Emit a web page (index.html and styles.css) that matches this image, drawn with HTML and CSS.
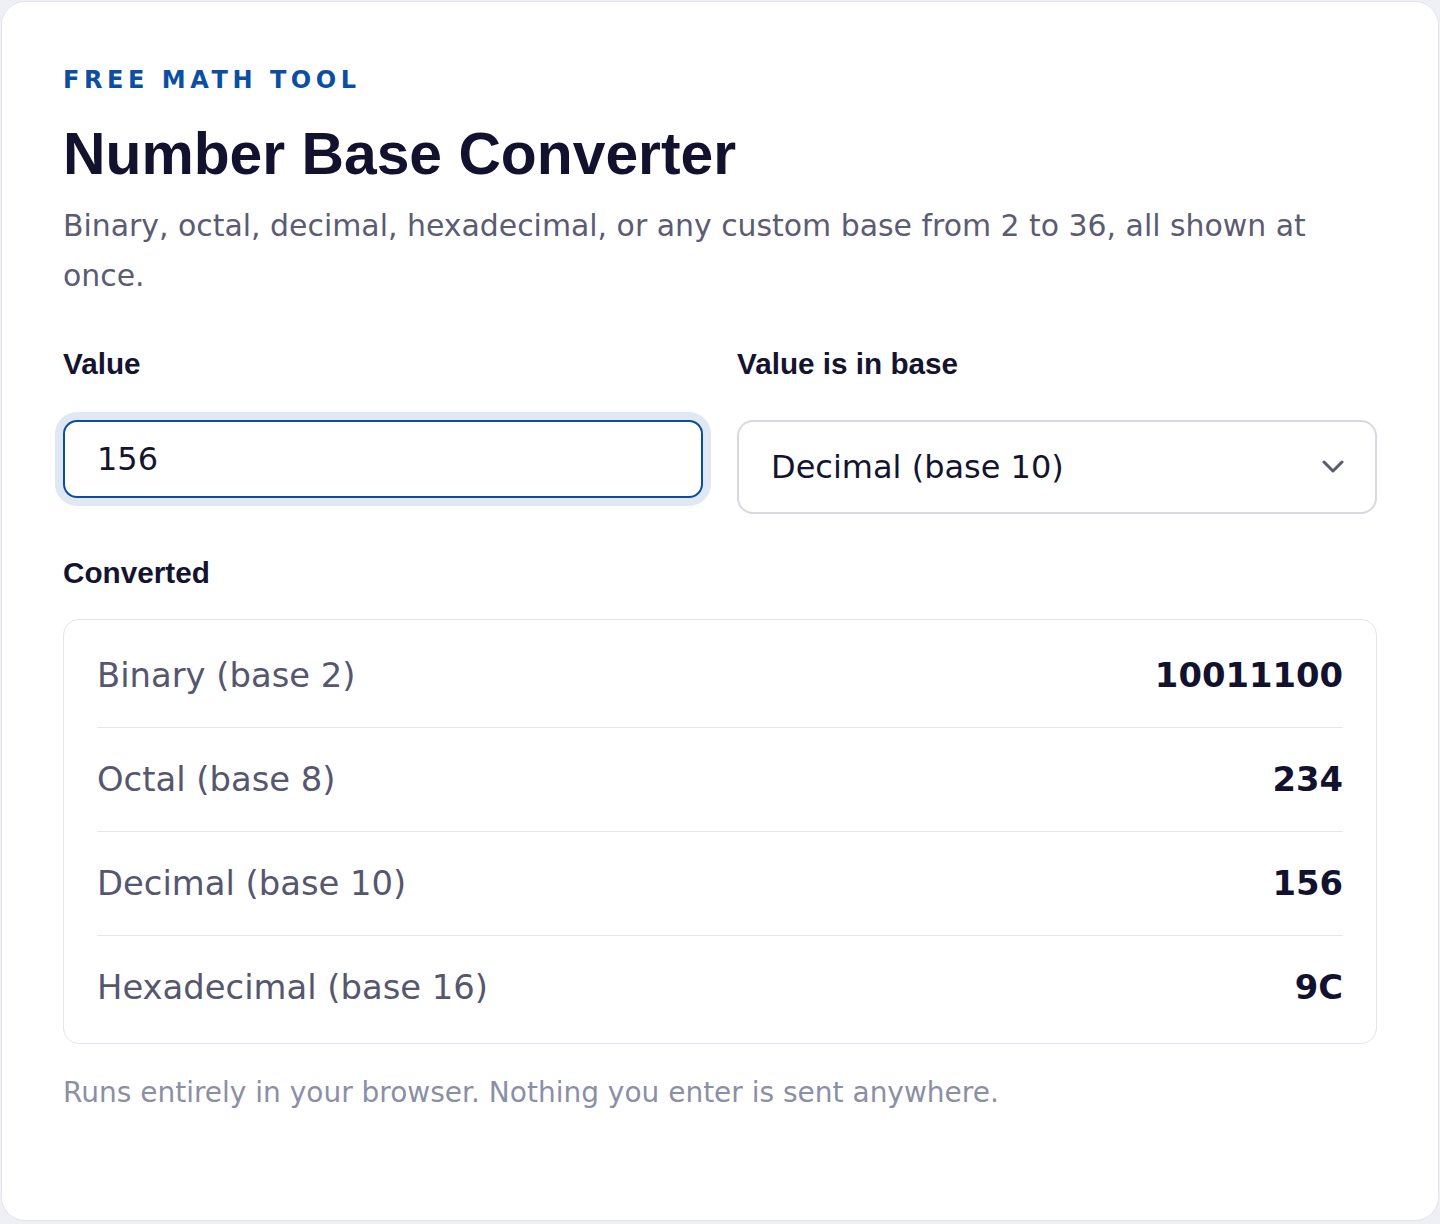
FILE: index.html
```html
<!DOCTYPE html>
<html lang="en">
<head>
    <meta charset="UTF-8">
    <meta name="viewport" content="width=device-width, initial-scale=1.0">
    <title>Number Base Converter</title>
    <link rel="stylesheet" href="styles.css">
</head>
<body>
    <main class="card">
        <p class="eyebrow">FREE MATH TOOL</p>
        <h1>Number Base Converter</h1>
        <p class="intro">Binary, octal, decimal, hexadecimal, or any custom base from 2 to 36, all shown at once.</p>

        <div class="fields">
            <div class="field">
                <label for="value">Value</label>
                <input type="text" id="value" class="field-input is-focused" value="156">
            </div>
            <div class="field">
                <label for="base">Value is in base</label>
                <div class="select-wrap">
                    <select id="base" class="field-select">
                        <option value="2">Binary (base 2)</option>
                        <option value="8">Octal (base 8)</option>
                        <option value="10" selected>Decimal (base 10)</option>
                        <option value="16">Hexadecimal (base 16)</option>
                    </select>
                    <svg class="chevron" width="22" height="14" viewBox="0 0 22 14" aria-hidden="true">
                        <polyline points="2,2 11,11 20,2" fill="none" stroke="#5a5b71" stroke-width="3" stroke-linecap="round" stroke-linejoin="round"/>
                    </svg>
                </div>
            </div>
        </div>

        <h2 class="section-label">Converted</h2>
        <div class="results">
            <div class="result-row">
                <span class="result-name">Binary (base 2)</span>
                <span class="result-value">10011100</span>
            </div>
            <div class="result-row">
                <span class="result-name">Octal (base 8)</span>
                <span class="result-value">234</span>
            </div>
            <div class="result-row">
                <span class="result-name">Decimal (base 10)</span>
                <span class="result-value">156</span>
            </div>
            <div class="result-row">
                <span class="result-name">Hexadecimal (base 16)</span>
                <span class="result-value">9C</span>
            </div>
        </div>

        <p class="note">Runs entirely in your browser. Nothing you enter is sent anywhere.</p>
    </main>
</body>
</html>
```

FILE: styles.css
```css
body {
    margin: 0;
    padding: 0;
    background-color: #eef0f5;
    font-family: 'DejaVu Sans', sans-serif;
    color: #13132e;
}
.card {
    margin: 1px;
    padding: 64px 61px 106px;
    background-color: #fff;
    border: 1px solid #e2e3ec;
    border-radius: 24px;
}
.eyebrow {
    margin: 0;
    font-family: 'DejaVu Sans', sans-serif;
    font-weight: bold;
    font-size: 24px;
    line-height: 1.2;
    letter-spacing: 4.55px;
    color: #0b4ea2;
}
h1 {
    margin: 25px 0 0;
    font-family: 'Liberation Sans', Arial, sans-serif;
    font-weight: bold;
    font-size: 58.8px;
    line-height: 1.15;
    color: #12122f;
}
.intro {
    margin: 14px 0 0;
    font-size: 29.9px;
    line-height: 50px;
    color: #5b5c73;
}
.fields {
    display: grid;
    grid-template-columns: 1fr 1fr;
    column-gap: 34px;
    align-items: start;
    margin-top: 45px;
}
.field label,
.section-label {
    display: block;
    margin: 0 0 38px;
    font-family: 'Liberation Sans', Arial, sans-serif;
    font-weight: bold;
    font-size: 29.7px;
    line-height: 1.2;
    color: #14142e;
}
.field-input {
    box-sizing: border-box;
    display: block;
    width: 100%;
    height: 78px;
    padding: 0 32px;
    border: 2px solid #d6d8e4;
    border-radius: 14px;
    font-family: 'DejaVu Sans', sans-serif;
    font-size: 32px;
    color: #14142e;
    background: #fff;
    outline: none;
}
.field-input.is-focused,
.field-input:focus {
    border-color: #0d4c9e;
    box-shadow: 0 0 0 8px #dfe8f3;
}
.select-wrap {
    position: relative;
}
.field-select {
    box-sizing: border-box;
    display: block;
    width: 100%;
    height: 94px;
    padding: 0 80px 0 32px;
    border: 2px solid #d6d8e4;
    border-radius: 16px;
    font-family: 'DejaVu Sans', sans-serif;
    font-size: 32px;
    color: #14142e;
    background: #fff;
    appearance: none;
    -webkit-appearance: none;
    outline: none;
}
.chevron {
    position: absolute;
    right: 33px;
    top: 40px;
    pointer-events: none;
}
.section-label {
    margin: 41px 0 28px;
}
.results {
    padding: 4px 33px;
    border: 1px solid #e4e5ee;
    border-radius: 16px;
}
.result-row {
    display: flex;
    justify-content: space-between;
    align-items: center;
    padding: 30px 0;
    font-size: 33.8px;
    line-height: 43px;
    border-bottom: 1px solid #e6e7ee;
}
.result-row:last-child {
    border-bottom: none;
}
.result-name {
    color: #56576f;
}
.result-value {
    font-weight: bold;
    color: #12122f;
}
.note {
    margin: 28px 0 0;
    font-size: 28px;
    line-height: 1.5;
    color: #8b8fa6;
}
```
